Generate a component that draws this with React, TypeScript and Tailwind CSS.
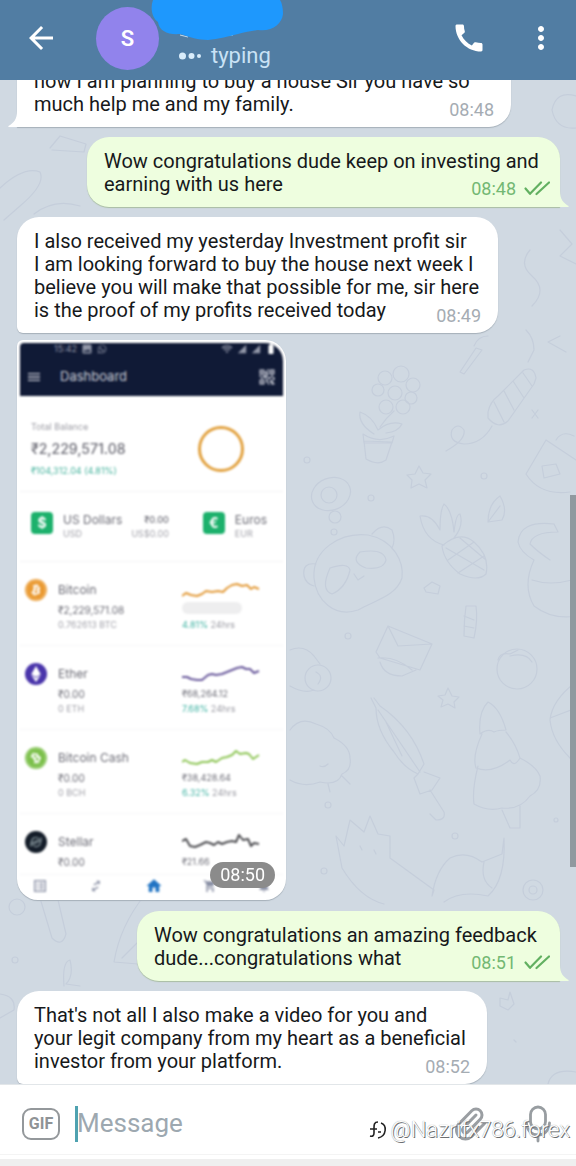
import type { ReactNode } from "react"
import { MdArrowBack, MdCall, MdHome, MdImage, MdMenu, MdMoreVert, MdNotifications, MdQrCode2, MdShoppingCart, MdSignalCellular4Bar, MdSwapHoriz, MdListAlt, MdWifi, MdBatteryFull } from "react-icons/md"
import { FaBitcoin, FaEthereum, FaWhatsapp } from "react-icons/fa"
import { SiStellar } from "react-icons/si"
import { Paperclip } from "lucide-react"

const messages = [
  {
    id: 1,
    own: false,
    tail: true,
    width: "w-[494px]",
    lines: ["now I am planning to buy a house Sir you have so", "much help me and my family."],
    time: "08:48",
  },
  {
    id: 2,
    own: true,
    tail: true,
    width: "w-[473px]",
    lines: ["Wow congratulations dude keep on investing and", "earning with us here"],
    time: "08:48",
  },
  {
    id: 3,
    own: false,
    tail: false,
    width: "w-[481px]",
    lines: [
      "I also received my yesterday Investment profit sir",
      "I am looking forward to buy the house next week I",
      "believe you will make that possible for me, sir here",
      "is the proof of my profits received today",
    ],
    time: "08:49",
  },
  {
    id: 4,
    own: true,
    tail: true,
    width: "w-[423px]",
    lines: ["Wow congratulations an amazing feedback", "dude...congratulations what"],
    time: "08:51",
  },
  {
    id: 5,
    own: false,
    tail: false,
    width: "w-[470px]",
    lines: [
      "That's not all I also make a video for you and",
      "your legit company from my heart as a beneficial",
      "investor from your platform.",
    ],
    time: "08:52",
  },
]

const coins = [
  {
    name: "Bitcoin",
    value: "₹2,229,571.08",
    amount: "0.762613 BTC",
    price: "",
    change: "4.81%",
    color: "#e39b3a",
    badge: "bg-[#ea9a32]",
    icon: <FaBitcoin className="size-5 text-[#ea9a32] bg-white rounded-full" />,
    points: "0,14 4,11 9,13 15,14 20,12 24,9 30,10 36,9 41,10 45,6 50,3 55,2 60,4 65,3 69,7 72,5 77,7",
  },
  {
    name: "Ether",
    value: "₹0.00",
    amount: "0 ETH",
    price: "₹68,264.12",
    change: "7.68%",
    color: "#6a5a9c",
    badge: "bg-[#4a35ab]",
    icon: <FaEthereum className="size-4 text-white" />,
    points: "0,11 5,11 9,13 15,14 20,14 26,9 30,8 34,9 40,8 45,6 50,4 55,2 60,1 64,3 68,3 72,7 77,5",
  },
  {
    name: "Bitcoin Cash",
    value: "₹0.00",
    amount: "0 BCH",
    price: "₹38,428.64",
    change: "6.32%",
    color: "#8fc657",
    badge: "bg-[#7cc04b]",
    icon: <FaBitcoin className="size-5 text-[#7cc04b] bg-white rounded-full -rotate-45" />,
    points: "0,12 3,10 8,13 15,14 20,12 26,12 30,10 34,12 40,8 45,7 50,5 54,1 58,4 64,3 67,4 71,9 77,5",
  },
  {
    name: "Stellar",
    value: "₹0.00",
    amount: "",
    price: "₹21.66",
    change: "",
    color: "#4e4e52",
    badge: "bg-[#141d29]",
    icon: <SiStellar className="size-3 text-[#9fb0b5]" />,
    points: "0,7 4,5 8,12 13,13 18,11 24,8 28,9 32,11 36,8 40,10 45,8 50,7 54,8 57,1 61,6 66,5 69,12 72,9 77,10",
  },
]

function Ticks() {
  return (
    <svg width="26" height="15" viewBox="0 0 26 15" fill="none" stroke="#62b061" strokeWidth="2.2" strokeLinecap="round" strokeLinejoin="round">
      <path d="M1.5 7.5 6 12.8 17 1.5M12.5 13 25 1.5" />
    </svg>
  )
}

function Bubble({ own, tail, width, lines, time }: { own: boolean; tail: boolean; width: string; lines: string[]; time: string }) {
  const last = lines.length - 1
  const shape = own
    ? "self-end bg-[#eefedf] rounded-[22px] rounded-br-none pl-[17px] pr-[10px] shadow-[0_1px_1px_#a9bda3]"
    : `self-start bg-white rounded-[22px] px-[17px] shadow-[0_1px_1px_#a6b0ba] ${tail ? "rounded-bl-none" : "rounded-bl-md"}`
  return (
    <div className={`relative max-w-full shrink-0 pt-[13px] pb-[11px] text-xl leading-[23px] text-[#17191b] ${width} ${shape}`}>
      {lines.slice(0, last).map((line) => (
        <p key={line} className="whitespace-nowrap">{line}</p>
      ))}
      <div className="flex items-end justify-between">
        <p>{lines[last]}</p>
        <div className={`flex items-center gap-2 text-lg leading-3 ${own ? "text-[#73b873]" : "text-[#a5acb3]"}`}>
          <time>{time}</time>
          {own && <Ticks />}
        </div>
      </div>
      {tail && (
        <svg
          className={`absolute bottom-0 ${own ? "left-full" : "right-full -scale-x-100"}`}
          width="9"
          height="16"
          viewBox="0 0 9 16"
          fill={own ? "#eefedf" : "#ffffff"}
        >
          <path d="M0 0C0 8 3 12 9 15.2L8 16H0Z" />
        </svg>
      )}
    </div>
  )
}

function FiatIcon({ children }: { children: ReactNode }) {
  return (
    <span className="flex size-[22px] shrink-0 items-center justify-center rounded bg-[#1cb16c] text-sm font-bold text-white">
      {children}
    </span>
  )
}

function Dashboard() {
  return (
    <div className="flex flex-col overflow-hidden rounded-[18px] rounded-tl-sm bg-white font-['Inter',sans-serif] text-[#6c6c76] blur-[1px]">
      <div className="h-[53px] bg-[#101a36] px-1.5 text-[#c9ccd6]">
        <div className="flex h-3 items-center gap-1 pl-7 text-[9px] text-[#9297a8]">
          <span>15:42</span>
          <MdImage className="size-3" />
          <FaWhatsapp className="size-2.5" />
          <MdWifi className="ml-auto size-3" />
          <MdSignalCellular4Bar className="size-2.5" />
          <MdSignalCellular4Bar className="size-2.5" />
          <MdBatteryFull className="size-3 text-white" />
        </div>
        <div className="flex h-11 items-center text-[13px]">
          <MdMenu className="size-4" />
          <span className="ml-[18px]">Dashboard</span>
          <MdQrCode2 className="ml-auto size-5" />
        </div>
      </div>
      <div className="flex h-24 items-center justify-between border-b border-[#f3f3f5] pl-[11px] pr-[38px] pt-[10px]">
        <div>
          <p className="text-[9px] leading-4 text-[#9b9ba3]">Total Balance</p>
          <p className="py-1 text-sm leading-5 font-medium">₹2,229,571.08</p>
          <p className="text-[9px] leading-4 text-[#45b39d]">₹104,312.04 (4.81%)</p>
        </div>
        <svg width="48" height="48" viewBox="0 0 48 48" fill="none">
          <circle cx="24" cy="24" r="21.5" stroke="#e2a240" strokeWidth="3" />
        </svg>
      </div>
      <div className="flex h-[70px] items-start border-b border-[#f3f3f5] pl-[11px] pr-4 pt-5 text-xs leading-4">
        <FiatIcon>$</FiatIcon>
        <div className="ml-[10px] whitespace-nowrap">
          <p>US Dollars</p>
          <p className="text-[9px] leading-3 text-[#a3a3ab]">USD</p>
        </div>
        <div className="ml-auto text-right text-[9px]">
          <p className="font-medium">₹0.00</p>
          <p className="leading-3 text-[#a3a3ab]">US$0.00</p>
        </div>
        <div className="ml-[34px] flex">
          <FiatIcon>€</FiatIcon>
          <div className="ml-[10px]">
            <p>Euros</p>
            <p className="text-[9px] leading-3 text-[#a3a3ab]">EUR</p>
          </div>
        </div>
      </div>
      {coins.map((coin) => (
        <div key={coin.name} className={`flex border-b border-[#f6f6f8] pl-[5px] pt-5 ${coin.change ? "h-21" : "h-[61px]"}`}>
          <span className={`-mt-[3px] flex size-[22px] shrink-0 items-center justify-center rounded-full ${coin.badge}`}>{coin.icon}</span>
          <div className="ml-[11px] w-[124px] leading-4">
            <p className="text-xs">{coin.name}</p>
            <p className="mt-1 text-[10px]">{coin.value}</p>
            <p className="text-[9px] leading-[14px] text-[#a3a3ab]">{coin.amount}</p>
          </div>
          <div>
            <svg width="78" height="16" viewBox="0 0 78 16" fill="none" stroke={coin.color} strokeWidth="2" strokeLinejoin="round">
              <polyline points={coin.points} />
            </svg>
            {coin.price ? (
              <p className="mt-1 text-[9px] leading-4">{coin.price}</p>
            ) : (
              <div className="my-1 h-3 w-15 rounded-full bg-[#eeeeef]" />
            )}
            {coin.change && (
              <p className="text-[9px] leading-[14px] text-[#9a9aa2]">
                <span className="text-[#3fb3a3]">{coin.change}</span> 24hrs
              </p>
            )}
          </div>
        </div>
      ))}
      <div className="flex h-[22px] items-center justify-between px-3 text-[#8a90a5]">
        <MdListAlt className="size-4" />
        <MdSwapHoriz className="size-4 -rotate-30" />
        <MdHome className="size-[18px] text-[#2174c4]" />
        <MdShoppingCart className="size-3.5" />
        <MdNotifications className="size-3.5" />
      </div>
    </div>
  )
}

function Wallpaper() {
  return (
    <svg className="absolute left-0 top-0" width="576" height="1004" viewBox="0 80 576 1004" fill="none" stroke="#c5cedb" strokeWidth="1.2" strokeLinecap="round" strokeLinejoin="round">
      {/* flower pot */}
      <path d="M364 441 366 459Q378 466 386 460L392 442ZM363 434Q378 444 394 436L392 443H364ZM374 434Q358 424 360 412Q372 416 378 430Q390 420 402 424Q398 432 386 433M380 427Q386 418 394 411" />
      <circle cx="395" cy="393" r="7" />
      <circle cx="385" cy="378" r="7" />
      <circle cx="401" cy="374" r="8" />
      <circle cx="413" cy="385" r="7" />
      <circle cx="411" cy="398" r="6" />
      <circle cx="403" cy="407" r="7" />
      <circle cx="386" cy="407" r="7" />
      <circle cx="378" cy="390" r="6" />
      {/* firework */}
      <path d="M488 412Q490 402 498 396L524 370Q534 366 536 378L534 384 508 421Q498 430 488 418ZM494 402 504 422M504 391 514 410M513 381 524 398M523 373 532 386M492 426Q482 444 464 444 448 442 452 430 458 422 464 430 466 440 446 451" />
      <path d="M460 372 476 348 482 350 464 374ZM474 346Q478 336 488 336M526 330Q534 338 534 350L528 362M560 336 548 342 566 352" />
      {/* panda */}
      <path d="M314 578C312 550 340 532 368 535 394 540 404 562 402 578 396 596 376 600 358 610 334 618 316 600 314 578ZM372 534Q382 522 392 530 396 540 392 548M316 564Q302 562 304 576 306 584 314 586" />
      <path d="M330 568Q348 562 350 570 346 588 332 594 320 590 330 568ZM360 552Q384 548 386 560 384 570 366 568 350 562 360 552M354 574 358 580 364 576" />
      <ellipse cx="331" cy="494" rx="20" ry="16" transform="rotate(-22 331 494)" />
      <circle cx="329" cy="495" r="8" />
      <circle cx="335" cy="517" r="6" />
      <circle cx="334" cy="532" r="3" />
      {/* pineapple */}
      <path d="M442 546Q460 530 474 542 490 556 486 574 478 582 460 574 444 562 442 546ZM448 560 474 542M458 573 484 556M446 548 484 570M460 538 486 560M444 545Q424 540 420 516 432 514 440 530 440 510 444 504 452 510 454 532 456 514 460 514 464 526 454 538" />
      <path d="M419 466 423 473 431 474 425 480 427 488 419 484 411 488 412 480 407 475 415 474ZM488 522Q488 504 500 496 508 510 502 520ZM488 522 500 506M424 588 432 582 440 586 438 594 426 592ZM532 410 538 418M538 410 532 418" />
      <circle cx="371" cy="498" r="3" />
      <circle cx="484" cy="476" r="3" />
      <circle cx="307" cy="460" r="3" />
      <circle cx="348" cy="636" r="3" />
      {/* teabag */}
      <path d="M526 474 546 440 576 460M526 474Q540 496 570 492M542 466 556 464 560 474 544 478ZM556 440Q562 430 574 436" />
      {/* cat tail */}
      <path d="M554 524Q520 520 518 542 520 552 534 560 522 586 534 606 552 620 576 616M554 524 558 532Q532 532 530 544 538 552 550 560M532 580Q550 586 572 580" />
      <path d="M466 606Q464 620 464 636L474 638Q478 620 476 606ZM464 616 474 620M464 626 474 628" />
      {/* envelope */}
      <path d="M388 626 432 644 420 670 380 658 376 652ZM388 626 398 646 432 644M378 658Q396 656 412 670M380 662Q384 676 402 676L416 670" />
      <circle cx="517" cy="669" r="20" />
      <path d="M498 660Q500 652 510 654L518 650M510 656Q526 652 532 662" />
      <path d="M448 688 452 696 459 697 454 702 455 708 448 704 441 707 443 700 438 696 445 695Z" />
      {/* lion and sheep */}
      <path d="M290 650Q304 644 314 656L320 664M290 686Q304 694 314 690" />
      <circle cx="318" cy="678" r="13" />
      <path d="M316 672Q324 676 318 684" />
      <path d="M290 730Q300 716 316 724 330 728 334 738 350 746 350 758 352 770 342 774 338 786 320 782 304 788 290 780M320 766Q324 768 328 764M328 784 330 792M342 776 350 784" />
      {/* umbrella */}
      <path d="M371 698 376 708Q376 730 394 752 404 768 418 774L424 764Q412 728 380 706L374 698M378 710 420 772M386 722 402 756M418 774 414 778 420 794 432 790 440 778 424 772M430 790 444 812Q446 820 436 820L430 814" />
      {/* fir tree */}
      <path d="M480 734Q478 712 488 702 500 708 506 730 498 730 494 732M480 734Q488 728 494 732M482 734Q472 756 476 768 492 774 510 760 514 768 520 758Q516 744 506 732M478 766Q472 790 474 804 488 812 502 808 520 810 530 796 542 790 540 776 536 766 520 758M502 810 510 828 520 828 520 806" />
      <path d="M576 682Q552 700 550 720 552 740 570 758M550 718 576 708" />
      {/* squirrel */}
      <path d="M342 868 336 836 344 846 350 820 364 832 370 816 378 834 390 836 390 858 434 890 432 896Q436 870 450 858 466 850 482 862L502 854 504 838Q506 880 488 896 460 890 444 902M342 868Q360 898 384 904M484 862Q480 880 492 888M360 846 362 850M374 850 376 854" />
      <circle cx="533" cy="890" r="10" />
      <circle cx="533" cy="890" r="4" />
      <circle cx="328" cy="805" r="3" />
      <circle cx="455" cy="836" r="3" />
      <circle cx="324" cy="871" r="3" />
      <circle cx="556" cy="820" r="2" />
      {/* strip along the left edge */}
      <path d="M50 148 60 136 86 144 84 152 52 150M0 188Q24 166 40 172 46 184 20 206L4 220M34 214Q54 198 80 206M40 898 52 938Q62 948 66 934L58 900M144 896Q120 926 114 962L138 964M122 958 140 940M64 986Q62 962 70 960 74 976 66 984L80 986" />
      <circle cx="17" cy="907" r="8" />
      <circle cx="15" cy="960" r="3" />
      <path d="M0 994Q16 996 14 1010L0 1018M500 998 508 1000 510 992 514 1004 508 1010 500 1006ZM548 1084Q552 1068 576 1072M514 1040 516 1042M552 110Q556 90 576 96M552 110Q556 130 576 128M530 250Q518 264 532 276 548 290 532 306M560 230 572 244 560 256 576 264" />
    </svg>
  )
}

export default function App() {
  return (
    <div className="relative flex h-screen flex-col overflow-hidden bg-[#d0d9e2] font-['Roboto',sans-serif]">
      <header className="relative z-10 flex h-20 shrink-0 items-center bg-[#517da3] pb-1 pl-[23px] pr-[17px] text-white">
        <button aria-label="Back">
          <MdArrowBack className="size-9" />
        </button>
        <div className="ml-[37px] flex size-[63px] shrink-0 items-center justify-center rounded-full bg-[#9183ec] text-[22px] font-semibold">
          S
        </div>
        <div className="ml-5 flex flex-1 items-end gap-[10px] self-stretch pb-2 text-[22px] leading-6 text-[#c9e2f5]">
          <svg width="22" height="24" viewBox="0 0 22 24" fill="#d9edfb">
            <circle cx="3.5" cy="12" r="3.5" />
            <circle cx="12.5" cy="12" r="3" />
            <circle cx="20" cy="12" r="2" />
          </svg>
          <span>typing</span>
        </div>
        <button aria-label="Call">
          <MdCall className="size-9" />
        </button>
        <button aria-label="More options" className="ml-9">
          <MdMoreVert className="size-9" />
        </button>
        <svg className="absolute left-[150px] top-0" width="134" height="42" viewBox="0 0 134 42">
          <path d="M30 35 38 37M76 35 83 35" stroke="#c5dbec" strokeWidth="1" />
          <path d="M3 0C0 8 2 18 8 22 9 31 18 35 30 34 40 37 48 40 58 40 68 39 80 36 88 34 95 32 102 31 108 30 122 32 132 24 133 14 133 8 132 3 130 0Z" fill="#1e98fd" />
        </svg>
      </header>

      <main className="relative flex flex-1 flex-col justify-end gap-[10px] overflow-hidden pl-[17px] pr-4">
        <Wallpaper />
        {messages.slice(0, 3).map((message) => (
          <Bubble key={message.id} {...message} />
        ))}
        <div className="relative mb-px -mt-[3px] w-[269px] shrink-0 self-start rounded-[21px] rounded-tl-md bg-white p-[3px] shadow-[0_1px_1px_#a6b0ba]">
          <Dashboard />
          <time className="absolute bottom-3 right-[11px] flex h-[26px] items-center rounded-full bg-[#8b8b8b] px-[10px] text-lg text-white">08:50</time>
        </div>
        {messages.slice(3).map((message) => (
          <Bubble key={message.id} {...message} />
        ))}
        <div className="absolute right-0 top-[415px] h-[372px] w-1.5 bg-[#90999f]" />
      </main>

      <footer className="relative shrink-0 border-t border-[#e2e6e9] bg-white">
        <div className="flex h-[70px] items-center border-b border-[#f4f4f4] pl-[22px] pr-[22px] pt-2">
          <button className="flex h-8 w-[38px] shrink-0 items-center justify-center rounded-[9px] border-2 border-[#94989b] text-base font-bold text-[#8f9396]">
            GIF
          </button>
          <span className="ml-[15px] h-9 w-[3px] shrink-0 bg-[#4fa2b0]" />
          <input
            aria-label="Message"
            placeholder="Message"
            className="-ml-px h-9 min-w-0 flex-1 text-[26px] outline-none placeholder:text-[#9da8b0]"
          />
          <button aria-label="Attach">
            <Paperclip className="size-9 text-[#9a9ea2]" strokeWidth={2} />
          </button>
          <button aria-label="Record voice message" className="ml-[34px]">
            <svg width="32" height="38" viewBox="0 0 32 38" fill="none" stroke="#989da1" strokeWidth="2.8" strokeLinecap="round">
              <rect x="8.5" y="2" width="15" height="22" rx="7.5" />
              <path d="M4.5 18C5 26 10 30 16 30S27 26 27.5 18M16 30V36" />
            </svg>
          </button>
        </div>
        <div className="mt-1 h-[7px] bg-[#efefef]" />
        <div className="absolute right-[6px] top-[33px] flex items-center gap-1 text-[22px] leading-6 font-light text-white [text-shadow:1px_1px_0_#6b6e71,0_0_1px_#8a8d90]">
          <svg width="18" height="20" viewBox="0 0 18 20" fill="none" stroke="#222" strokeWidth="1.6">
            <path d="M9 2C5 2 5 5 5 8V13Q5 17 1 16M1 9H8M12 3C18 5 18 16 9 18M9 12H12" />
          </svg>
          <span>@Nazrifx786.forex</span>
        </div>
      </footer>
    </div>
  )
}
